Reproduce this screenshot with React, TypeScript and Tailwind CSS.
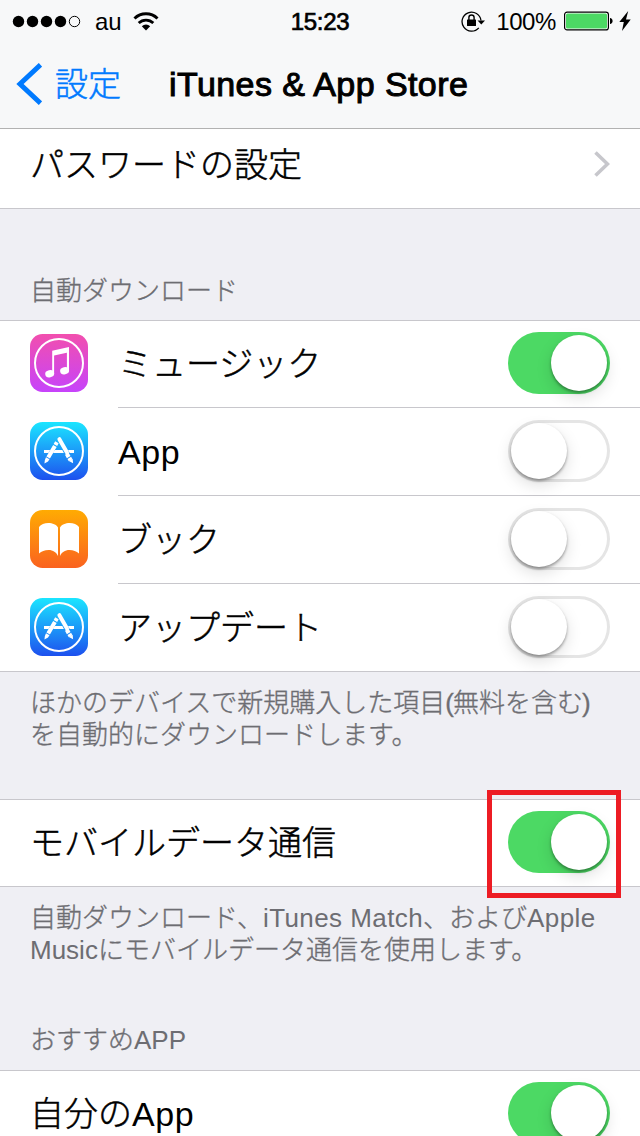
import type { ReactNode } from 'react';

function Toggle({ on = false }: { on?: boolean }) {
  return (
    <div
      role="switch"
      aria-checked={on}
      className={
        on
          ? 'mt-[12px] mr-[30px] flex h-[62px] w-[102px] shrink-0 justify-end rounded-full bg-[#4cd964] p-[3px]'
          : 'mt-[12px] mr-[30px] flex h-[62px] w-[102px] shrink-0 justify-start rounded-full bg-white p-[3px] shadow-[inset_0_0_0_3px_#e5e5e5]'
      }
    >
      <div className="size-[56px] rounded-full bg-white shadow-[0_2px_3px_rgba(0,0,0,0.35),0_6px_16px_rgba(0,0,0,0.13)]" />
    </div>
  );
}

function Latin({ children }: { children: ReactNode }) {
  return <span className="tracking-[0.016em] [-webkit-text-stroke:0px]">{children}</span>;
}

function MusicIcon() {
  return (
    <svg viewBox="0 0 58 58" className="size-[58px]">
      <defs>
        <linearGradient id="music" x1="0" y1="0" x2="0" y2="1">
          <stop offset="0" stopColor="#f24fae" />
          <stop offset="1" stopColor="#c643fb" />
        </linearGradient>
      </defs>
      <rect width="58" height="58" rx="12.5" fill="url(#music)" />
      <circle cx="29" cy="29" r="24" fill="none" stroke="#fff" strokeWidth="2" />
      <path d="M22.200 16.700 39 13v5.300l-14.900 3.300V40h-1.900z" fill="#fff" />
      <path d="M36.900 17H39v20h-2.100z" fill="#fff" />
      <ellipse cx="19.700" cy="39.700" rx="4.500" ry="3.600" transform="rotate(-12 19.700 39.700)" fill="#fff" />
      <ellipse cx="34.600" cy="36.700" rx="4.500" ry="3.600" transform="rotate(-12 34.600 36.700)" fill="#fff" />
    </svg>
  );
}

function StoreIcon({ id }: { id: string }) {
  return (
    <svg viewBox="0 0 58 58" className="size-[58px]">
      <defs>
        <linearGradient id={id} x1="0" y1="0" x2="0" y2="1">
          <stop offset="0" stopColor="#1be6ff" />
          <stop offset="0.5" stopColor="#1c9bf8" />
          <stop offset="1" stopColor="#1d50ee" />
        </linearGradient>
      </defs>
      <rect width="58" height="58" rx="12.5" fill={`url(#${id})`} />
      <circle cx="29" cy="29" r="24" fill="none" stroke="#fff" strokeWidth="2" />
      <path d="M14 28h6.200l-1.700 3H14zM24.700 28h7.600l1.600 3H23zM38 28h6v3h-4.300z" fill="#fff" />
      <path d="m29.400 17.200 7.600 13.300" stroke="#fff" strokeWidth="4" strokeLinecap="round" />
      <path d="m36.800 31.800 1.900 3.300M39.300 35.900l1.300 2.300" stroke="#fff" strokeWidth="4.200" />
      <path d="m38.900 38.900 3.700-2.100.5 4.500z" fill="#fff" />
      <path d="m26.900 20.300-1.500 2.600M24.900 23.900l-6.700 11.700" stroke="#fff" strokeWidth="4" />
      <path d="m16 35.300 3.500 2-1.500 2.200-3.600 1.900.5-3.500z" fill="#fff" />
    </svg>
  );
}

function BookIcon() {
  return (
    <svg viewBox="0 0 58 58" className="size-[58px]">
      <defs>
        <linearGradient id="book" x1="0" y1="0" x2="0" y2="1">
          <stop offset="0" stopColor="#ffab02" />
          <stop offset="1" stopColor="#fa621f" />
        </linearGradient>
      </defs>
      <rect width="58" height="58" rx="12.5" fill="url(#book)" />
      <path d="M9 17c2-2.500 5.500-4 9.300-4 4.200 0 8.200 1.600 9.700 4.500V46c-1.500-3.500-5-6-9.400-6-4 0-7 1.200-9.600 3.500z" fill="#fff" />
      <path d="M49 17c-2-2.500-5.500-4-9.300-4-4.200 0-8.200 1.600-9.700 4.500V46c1.500-3.500 5-6 9.400-6 4 0 7 1.200 9.600 3.500z" fill="#fff" />
    </svg>
  );
}

function Group({ children }: { children: ReactNode }) {
  return (
    <section className="bg-white shadow-[inset_0_1px_0_#c8c7cc,inset_0_-1px_0_#c8c7cc]">{children}</section>
  );
}

function IconRow({ icon, label, on }: { icon: ReactNode; label: ReactNode; on?: boolean }) {
  return (
    <div className="flex h-[88px] pl-[30px]">
      <div className="mt-[14px] w-[88px] shrink-0">{icon}</div>
      <div className="flex flex-1 justify-between border-b border-[#c8c7cc]">
        <span className="mt-[20px] leading-[48px]">{label}</span>
        <Toggle on={on} />
      </div>
    </div>
  );
}

function StatusBar() {
  return (
    <div className="grid h-[40px] grid-cols-[1fr_auto_1fr] items-center [-webkit-text-stroke:0px]">
      <div className="flex items-center pl-[12px]">
        <svg viewBox="0 0 70 14" className="h-[14px] w-[70px]">
          <circle cx="6.500" cy="7.500" r="5.700" />
          <circle cx="20.500" cy="7.500" r="5.700" />
          <circle cx="34.500" cy="7.500" r="5.700" />
          <circle cx="48.500" cy="7.500" r="5.700" />
          <circle cx="62.500" cy="7.500" r="5.200" fill="none" stroke="#000" strokeWidth="1" />
        </svg>
        <span className="mt-[2px] ml-[13px] text-[24px] leading-[40px] tracking-[-0.2px]">au</span>
        <svg viewBox="0 0 26 19" className="ml-[12px] h-[19px] w-[26px]">
          <path d="M1.500 6.500a16.500 16.500 0 0 1 23 0" fill="none" stroke="#000" strokeWidth="3" />
          <path d="M5.700 11a10.500 10.500 0 0 1 14.600 0" fill="none" stroke="#000" strokeWidth="2.800" />
          <path d="M13 18.500 8.800 14.300a6 6 0 0 1 8.400 0z" />
        </svg>
      </div>
      <span className="mt-[2px] text-[24px] leading-[40px] tracking-[-0.3px] [-webkit-text-stroke:0.7px_#000]">15:23</span>
      <div className="flex items-center justify-end pr-[9px]">
        <svg viewBox="0 0 24 22" className="mr-[11px] h-[22px] w-[24px]">
          <path d="M17.800 17.800A9.500 9.500 0 1 1 20 10.500" fill="none" stroke="#000" strokeWidth="1.300" />
          <path d="M16.500 10.500H24l-3.700 4z" />
          <rect x="6" y="9.500" width="9" height="6.500" rx=".5" />
          <path d="M7.900 10V7.600a2.600 2.600 0 0 1 5.200 0V10" fill="none" stroke="#000" strokeWidth="1.400" />
        </svg>
        <span className="mt-[2px] text-[24px] leading-[40px] tracking-[-0.4px]">100%</span>
        <svg viewBox="0 0 50 20" className="ml-[8px] h-[20px] w-[50px]">
          <rect x=".6" y="1.100" width="43.800" height="17.800" rx="2.500" fill="#fff" stroke="#000" strokeWidth="1.200" />
          <rect x="2" y="2.500" width="41" height="15" rx="1.500" fill="#4cd964" />
          <path d="M46 7c1.500.2 2.600 1.300 2.600 3s-1.100 2.800-2.600 3z" />
        </svg>
        <svg viewBox="0 0 12 20" className="ml-[5px] h-[20px] w-[12px]">
          <path d="M9.200 0 .3 11h4.500L3 20l8.700-11.500H7z" />
        </svg>
      </div>
    </div>
  );
}

export default function App() {
  return (
    <div className="h-[1136px] w-[640px] overflow-hidden bg-[#efeff4] font-['Liberation_Sans','Noto_Sans_CJK_JP',sans-serif] text-[34px] font-light text-black [-webkit-text-stroke:0.5px]">
      <header className="h-[129px] border-b border-[#b2b2b2] bg-[#f7f8f9]">
        <StatusBar />
        <div className="flex h-[88px] items-center">
          <div className="flex w-[169px] items-center pl-[16px] text-[#007aff]">
            <svg viewBox="0 0 26 42" className="h-[42px] w-[26px]">
              <path d="M24.500 1.800 4 21l20.500 19.200" fill="none" stroke="#007aff" strokeWidth="5" />
            </svg>
            <span className="mt-[2px] ml-[13px] text-[33px] leading-[48px]">設定</span>
          </div>
          <h1 className="text-[34px] leading-[48px] tracking-[0.42px] whitespace-nowrap [-webkit-text-stroke:1px_#000]">
            iTunes &amp; App Store
          </h1>
        </div>
      </header>

      <section className="flex h-[80px] justify-between border-b border-[#c8c7cc] bg-white pr-[30px] pl-[30px]">
        <span className="mt-[12px] leading-[48px]">パスワードの設定</span>
        <svg viewBox="0 0 16 26" className="mt-[22px] h-[26px] w-[16px]">
          <path d="m1.500 1.500 12 11.500-12 11.500" fill="none" stroke="#c7c7cc" strokeWidth="3.600" />
        </svg>
      </section>

      <h2 className="h-[111px] pt-[66px] pl-[30px] text-[26px] leading-[32px] text-[#6d6d72] [-webkit-text-stroke:0.35px]">
        自動ダウンロード
      </h2>
      <Group>
        <IconRow icon={<MusicIcon />} label="ミュージック" on />
        <IconRow icon={<StoreIcon id="store-app" />} label={<Latin>App</Latin>} />
        <IconRow icon={<BookIcon />} label="ブック" />
        <IconRow icon={<StoreIcon id="store-update" />} label="アップデート" />
      </Group>
      <p className="h-[127px] pt-[15px] pl-[30px] text-[26px] leading-[32px] text-[#6d6d72] [-webkit-text-stroke:0.35px]">
        ほかのデバイスで新規購入した項目<span className="-tracking-[0.8px]">(</span>無料を含む
        <span className="-ml-[1px]">)</span>
        <br />
        を自動的にダウンロードします。
      </p>

      <Group>
        <div className="relative flex h-[88px] justify-between pl-[30px]">
          <span className="mt-[20px] leading-[48px]">モバイルデータ通信</span>
          <Toggle on />
          <div className="absolute -top-[9px] right-[19px] h-[108px] w-[134px] border-[5px] border-[#ed1c24]" />
        </div>
      </Group>
      <p className="h-[123px] pt-[15px] pl-[30px] text-[26px] leading-[32px] text-[#6d6d72] [-webkit-text-stroke:0.35px]">
        自動ダウンロード、<Latin>iTunes Match</Latin>、および<Latin>Apple</Latin>
        <br />
        <span className="[-webkit-text-stroke:0px]">Music</span>にモバイルデータ通信を使用します。
      </p>
      <h2 className="h-[60px] pt-[14px] pl-[30px] text-[26px] leading-[32px] text-[#6d6d72] [-webkit-text-stroke:0.35px]">
        おすすめ<span className="[-webkit-text-stroke:0px]">APP</span>
      </h2>
      <Group>
        <div className="flex h-[88px] justify-between pl-[30px]">
          <span className="mt-[20px] leading-[48px]">
            自分の<Latin>App</Latin>
          </span>
          <Toggle on />
        </div>
      </Group>
    </div>
  );
}
